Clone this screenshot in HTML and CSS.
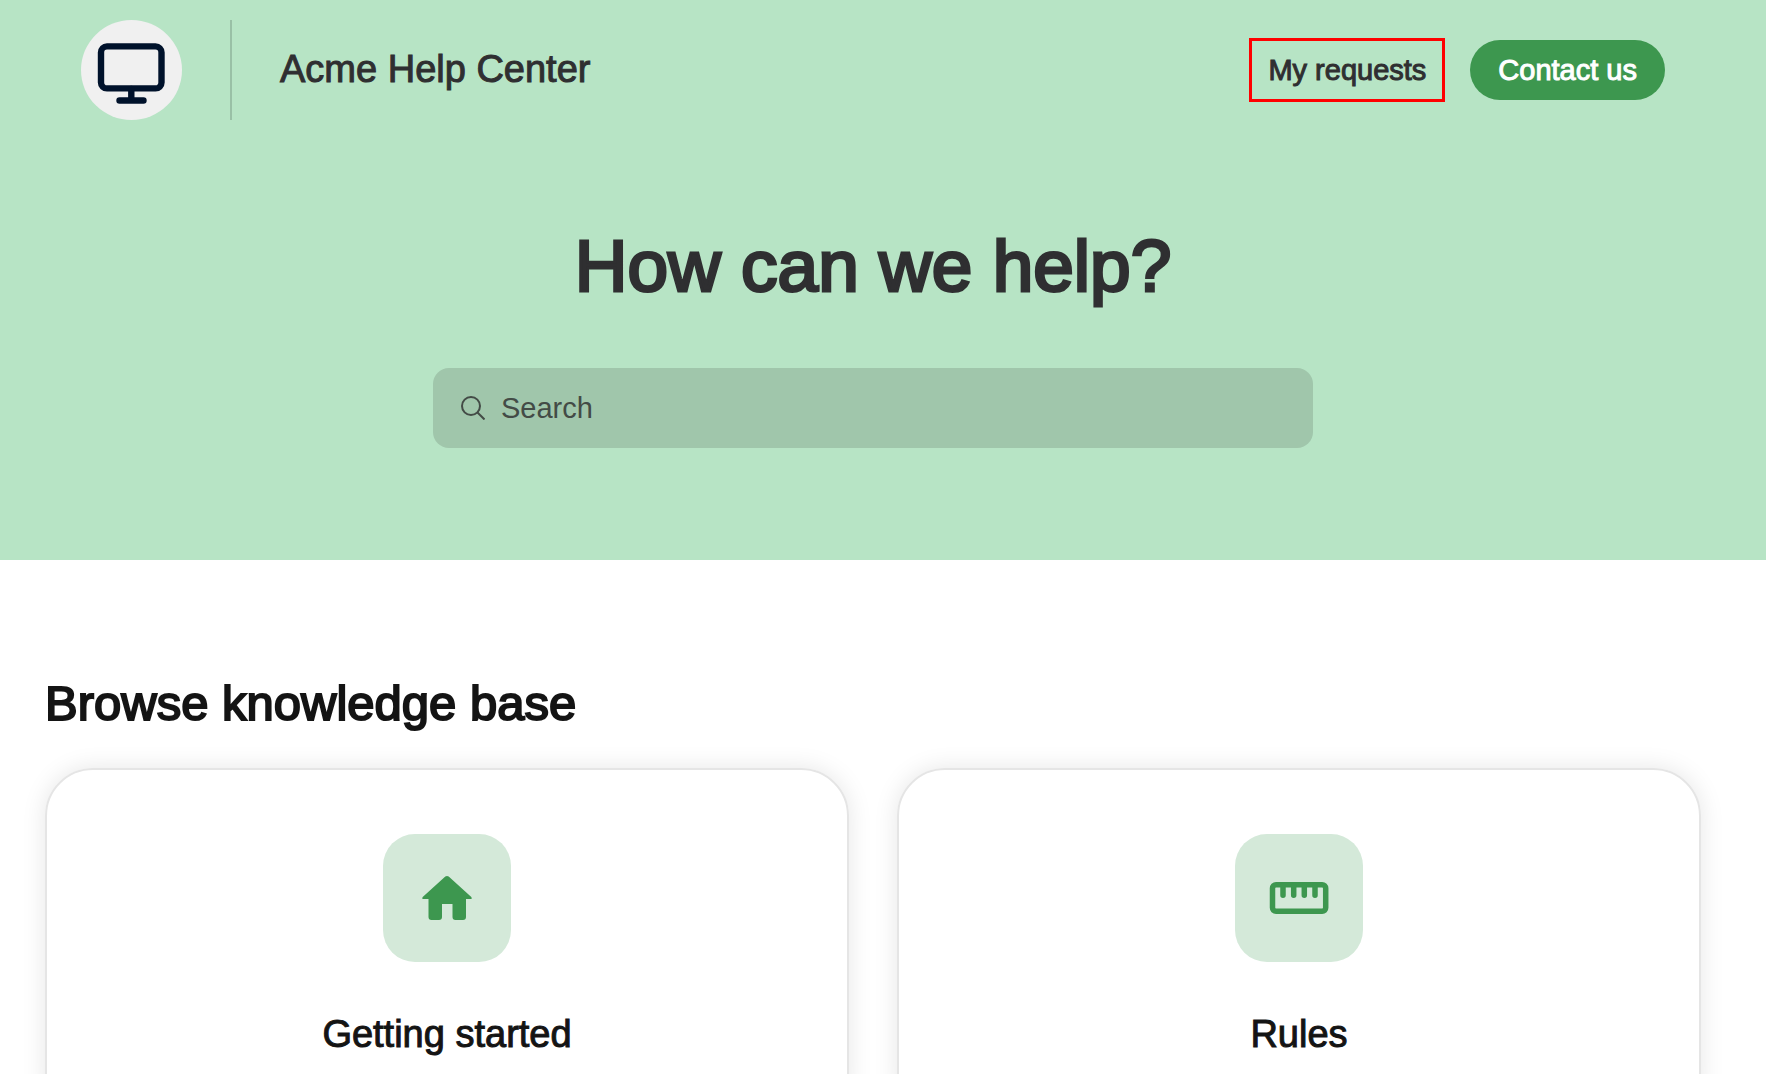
FILE: index.html
```html
<!DOCTYPE html>
<html lang="en">
<head>
  <meta charset="UTF-8" />
  <meta name="viewport" content="width=device-width, initial-scale=1.0" />
  <title>Acme Help Center</title>
  <link rel="stylesheet" href="styles.css">
</head>
<body>
  <div class="hero">
    <header class="header">
      <a class="logo" href="#" aria-label="Home">
        <svg viewBox="0 0 100 100" fill="none" stroke="#00122b" stroke-width="6.400" stroke-linecap="round">
          <rect x="20" y="26.400" width="60.500" height="42" rx="6" />
          <path d="M50.300 69v11M38.500 80.500h24" />
        </svg>
      </a>
      <span class="divider"></span>
      <a class="site-name" href="#">Acme Help Center</a>
      <nav class="nav">
        <a class="requests" href="#">My requests</a>
        <button class="contact" type="button">Contact us</button>
      </nav>
    </header>

    <h1>How can we help?</h1>

    <form class="search" role="search">
      <label for="query" aria-label="Search">
        <svg viewBox="0 0 24 24" fill="none" stroke="#434b46" stroke-width="2">
          <circle cx="10" cy="10" r="9" />
          <path d="M16.500 16.500l7 7" />
        </svg>
      </label>
      <input type="text" id="query" placeholder="Search">
    </form>
  </div>

  <main class="content">
    <h2>Browse knowledge base</h2>
    <div class="cards">
      <a class="card" href="#">
        <span class="card-icon">
          <svg viewBox="0 0 128 128" fill="#3d974f">
            <path d="M62.300 42.600q1.700-1.300 3.400 0L88.300 63q1.200 2-.8 2H83v18q0 3-3 3h-7.500q-3 0-3-3V70H59v13q0 3-3 3h-7.500q-3 0-3-3V65h-5q-2 0-.8-2z" />
          </svg>
        </span>
        <h3>Getting started</h3>
      </a>
      <a class="card" href="#">
        <span class="card-icon">
          <svg viewBox="0 0 128 128" fill="none" stroke="#3d974f">
            <rect x="37.500" y="50.700" width="53.200" height="26.600" rx="3.500" stroke-width="5.500" />
            <path d="M48 52v9.300M58.700 52v9.300M69.300 52v9.300M80 52v9.300" stroke-width="5.500" stroke-linecap="round" />
          </svg>
        </span>
        <h3>Rules</h3>
      </a>
    </div>
  </main>
</body>
</html>
```
FILE: styles.css
```css
* {
  box-sizing: border-box;
}
body {
  margin: 0;
  font-family: "Liberation Sans", Arial, sans-serif;
  font-size: 29px;
  color: #141414;
  background-color: #fff;
}
a {
  color: inherit;
  text-decoration: none;
}
h1, h2, h3 {
  margin: 0;
  font-weight: normal;
}
svg {
  display: block;
}
.hero {
  padding: 20px 101px 112px 81px;
  background-color: #b7e4c5;
  color: #2f2f31;
}
.header {
  display: flex;
  align-items: center;
}
.logo {
  width: 101px;
  height: 100px;
  border-radius: 50%;
  background-color: #f0f0f0;
}
.logo svg {
  width: 100px;
  height: 100px;
}
.divider {
  width: 2px;
  height: 100px;
  margin: 0 48px;
  background-color: #99c0a6;
}
.site-name {
  font-size: 38px;
  line-height: 48px;
  padding-bottom: 2px;
  -webkit-text-stroke: 1px;
}
.nav {
  display: flex;
  align-items: center;
  gap: 25px;
  margin-left: auto;
}
.requests {
  padding: 12px 16px;
  border: 3px solid #ff0000;
  line-height: 34px;
  -webkit-text-stroke: 1px;
}
.contact {
  height: 60px;
  padding: 0 28px;
  border: none;
  border-radius: 30px;
  background-color: #3d974f;
  color: #fff;
  font: inherit;
  -webkit-text-stroke: 1px;
  cursor: pointer;
}
h1 {
  margin: 102px 0 58px;
  font-size: 73px;
  line-height: 88px;
  text-align: center;
  -webkit-text-stroke: 3px;
}
.search {
  display: flex;
  align-items: center;
  max-width: 880px;
  height: 80px;
  margin: 0 auto;
  padding: 0 28px;
  border-radius: 16px;
  background-color: #a0c6ab;
}
.search svg {
  width: 24px;
  height: 24px;
}
.search input {
  flex: 1;
  min-width: 0;
  margin-left: 16px;
  padding: 0;
  border: none;
  outline: none;
  background: none;
  color: #2f2f31;
  font: inherit;
}
.search input::placeholder {
  color: #434b46;
}
.content {
  padding: 111px 65px 0 45px;
}
h2 {
  margin-bottom: 33px;
  font-size: 49px;
  line-height: 64px;
  -webkit-text-stroke: 2px;
}
.cards {
  display: grid;
  grid-template-columns: 1fr 1fr;
  gap: 48px;
}
.card {
  display: flex;
  flex-direction: column;
  align-items: center;
  padding: 64px 32px;
  border: 2px solid #e5e5e5;
  border-radius: 48px;
  box-shadow: 0 0 24px rgba(0, 0, 0, 0.1);
}
.card-icon {
  width: 128px;
  height: 128px;
  margin-bottom: 48px;
  border-radius: 32px;
  background-color: #d4e9d9;
}
h3 {
  font-size: 38px;
  line-height: 48px;
  -webkit-text-stroke: 1px;
}
```
